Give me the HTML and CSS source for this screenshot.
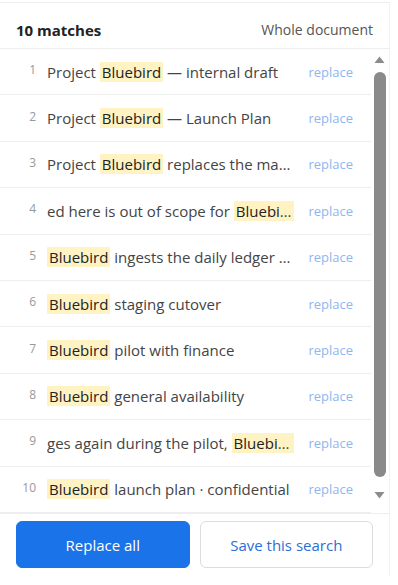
FILE: index.html
```html
<!DOCTYPE html>
<html lang="en">
<head>
<meta charset="utf-8">
<link rel="stylesheet" href="styles.css">
</head>
<body>
<div class="panel">
  <div class="header">
    <span class="count">10 matches</span>
    <span class="scope">Whole document</span>
  </div>
  <div class="list-wrap">
    <div class="list">
      <div class="row"><span class="num">1</span><span class="text">Project <mark>Bluebird</mark> — internal draft</span><span class="act">replace</span></div>
      <div class="row"><span class="num">2</span><span class="text">Project <mark>Bluebird</mark> — Launch Plan</span><span class="act">replace</span></div>
      <div class="row"><span class="num">3</span><span class="text">Project <mark>Bluebird</mark> replaces the manual reconciliation process</span><span class="act">replace</span></div>
      <div class="row"><span class="num">4</span><span class="text">ed here is out of scope for <mark>Bluebird</mark> and will be handled</span><span class="act">replace</span></div>
      <div class="row"><span class="num">5</span><span class="text"><mark>Bluebird</mark> ingests the daily ledger exports</span><span class="act">replace</span></div>
      <div class="row"><span class="num">6</span><span class="text"><mark>Bluebird</mark> staging cutover</span><span class="act">replace</span></div>
      <div class="row"><span class="num">7</span><span class="text"><mark>Bluebird</mark> pilot with finance</span><span class="act">replace</span></div>
      <div class="row"><span class="num">8</span><span class="text"><mark>Bluebird</mark> general availability</span><span class="act">replace</span></div>
      <div class="row"><span class="num">9</span><span class="text">ges again during the pilot, <mark>Bluebird</mark> will be frozen</span><span class="act">replace</span></div>
      <div class="row"><span class="num">10</span><span class="text"><mark>Bluebird</mark> launch plan · confidential</span><span class="act">replace</span></div>
    </div>
    <div class="scrollbar" aria-hidden="true">
      <svg class="arrow up" width="11" height="8" viewBox="0 0 11 8"><path d="M5.5 0.5 L10.5 7 L0.5 7 Z" fill="#8c8c8c"/></svg>
      <div class="thumb"></div>
      <svg class="arrow down" width="11" height="8" viewBox="0 0 11 8"><path d="M0.5 1 L10.5 1 L5.5 7.5 Z" fill="#8c8c8c"/></svg>
    </div>
  </div>
  <div class="footer">
    <button class="btn primary">Replace all</button>
    <button class="btn secondary">Save this search</button>
  </div>
</div>
</body>
</html>
```
FILE: styles.css
```css
html, body {
  margin: 0;
  padding: 0;
  background: #ffffff;
}
body {
  font-family: "Open Sans", "Noto Sans", sans-serif;
  color: #444;
}
.panel {
  width: 389px;
  margin-top: 2px;
  border-top: 1px solid #eeeeee;
  border-right: 1px solid #f2f2f2;
  background: #fff;
}
.header {
  box-sizing: border-box;
  display: flex;
  justify-content: space-between;
  align-items: center;
  height: 46px;
  padding: 8px 16px 0 16px;
  border-bottom: 1px solid #eeeeee;
}
.count {
  font-size: 15px;
  font-weight: 700;
  color: #222;
}
.scope {
  font-size: 14px;
  color: #555;
}
.list-wrap {
  position: relative;
  height: 464px;
}
.list {
  height: 100%;
  overflow-y: auto;
  scrollbar-width: none;
  padding-right: 18px;
  box-sizing: border-box;
}
.row {
  display: flex;
  align-items: center;
  height: 45.4px;
  padding: 0 18px 0 16px;
  border-bottom: 1px solid #eeeeee;
}
.row:last-child {
  margin-bottom: 16px;
}
.num {
  flex: 0 0 20px;
  text-align: right;
  font-size: 12px;
  color: #999;
  margin-right: 11px;
  position: relative;
  top: -2px;
}
.text {
  flex: 1 1 auto;
  min-width: 0;
  font-size: 15px;
  color: #444;
  white-space: nowrap;
  overflow: hidden;
  text-overflow: ellipsis;
}
mark {
  background: #fff3c4;
  color: #222;
  padding: 1px 2px;
  border-radius: 2px;
}
.act {
  flex: 0 0 auto;
  margin-left: 14px;
  font-size: 13px;
  color: #8fb6ee;
}
.scrollbar {
  position: absolute;
  top: 0;
  right: 2px;
  width: 15px;
  height: 100%;
  display: flex;
  flex-direction: column;
  align-items: center;
}
.arrow.up {
  margin-top: 7px;
}
.thumb {
  width: 12px;
  height: 405px;
  margin-top: 8px;
  border-radius: 6px;
  background: #8a8a8a;
}
.arrow.down {
  margin-top: 14px;
}
.footer {
  display: flex;
  gap: 10px;
  padding: 7px 16px 8px;
  border-top: 1px solid #eeeeee;
}
.btn {
  flex: 1 1 0;
  height: 47px;
  border-radius: 6px;
  font-family: "Open Sans", "Noto Sans", sans-serif;
  font-size: 15px;
}
.primary {
  background: #1a73e8;
  color: #fff;
  border: 1px solid #1a73e8;
}
.secondary {
  background: #fff;
  color: #2a6fd8;
  border: 1px solid #dcdcdc;
}
```
